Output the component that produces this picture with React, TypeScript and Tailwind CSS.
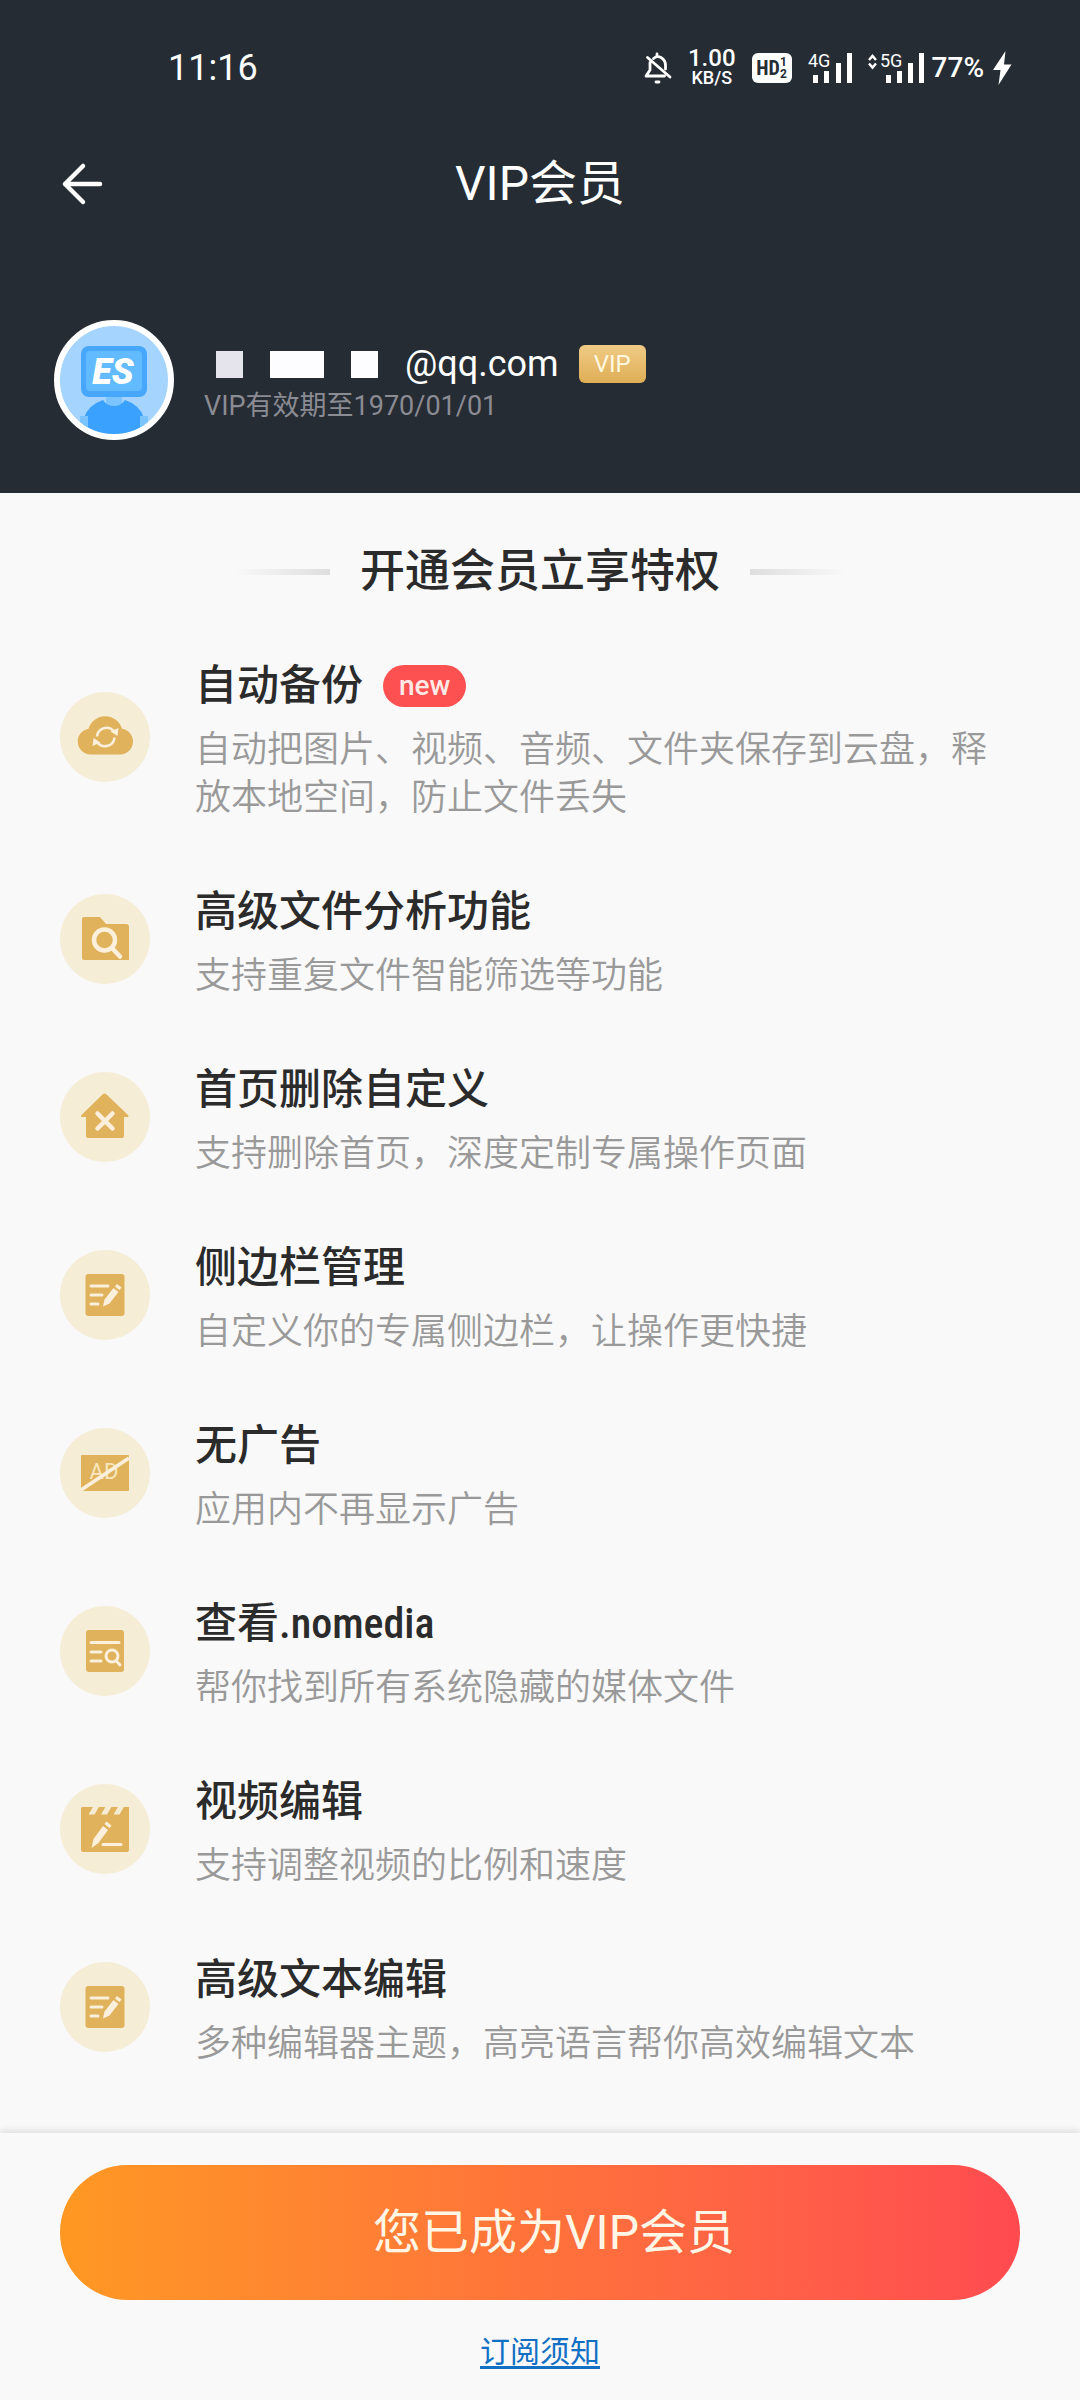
import React from 'react';

interface Feature {
  title: string;
  description: string;
  icon: React.ReactNode;
  isNew?: boolean;
}

const GOLD = '#dfb25b';
const CREAM = '#fcf0dc';

// --- Feature icons, all drawn on a 60x60 board ---

const CloudSyncIcon = () => (
  <svg viewBox="0 0 60 60" className="h-15 w-15" fill="none">
    <path d="M15 48a13 13 0 0 1-2-25.800a17.500 17.500 0 0 1 33.500 0a13 13 0 0 1-1 25.800z" fill={GOLD} transform="translate(.5 -.5)" />
    <path d="M22 29.500a9.500 9.500 0 0 1 17-5M39.500 30.500a9.500 9.500 0 0 1-17 5" stroke={CREAM} strokeWidth="2.600" />
    <path d="M43.500 21l-1 8-7-4.500zM17.500 39l1-8 7 4.500z" fill={CREAM} />
  </svg>
);

const FolderSearchIcon = () => (
  <svg viewBox="0 0 60 60" className="h-15 w-15" fill="none">
    <path d="M9 8h16l6 7h20a3 3 0 0 1 3 3v33H9a2 2 0 0 1-2-2V10a2 2 0 0 1 2-2z" fill={GOLD} />
    <circle cx="29.500" cy="31" r="10.500" stroke={CREAM} strokeWidth="4.500" />
    <path d="M37 39l8 8.500" stroke={CREAM} strokeWidth="4.500" strokeLinecap="round" />
  </svg>
);

const HomeRemoveIcon = () => (
  <svg viewBox="0 0 60 60" className="h-15 w-15" fill="none">
    <path d="M27.500 7.500q2-2 4 0L53 28q1.500 2-1 2h-3v19a2 2 0 0 1-2 2H13a2 2 0 0 1-2-2V30H7.500q-2.500 0-1-2z" fill={GOLD} />
    <path d="M22.500 26.500l15 15M37.500 26.500l-15 15" stroke={CREAM} strokeWidth="4.500" strokeLinecap="round" />
  </svg>
);

const NoteEditIcon = () => (
  <svg viewBox="0 0 60 60" className="h-15 w-15" fill="none">
    <rect x="10.500" y="9" width="39" height="42" rx="3" fill={GOLD} />
    <path d="M16 21h17M16 30h11M16 39h7" stroke={CREAM} strokeWidth="3" strokeLinecap="round" />
    <path d="M28 41.500l1.500-7 9-11.500 5 4-9 11.500z" fill={CREAM} />
    <path d="M40 21.500l2-2.600 4.500 3.600-2 2.600z" fill={CREAM} />
  </svg>
);

const NoAdIcon = () => (
  <svg viewBox="0 0 60 60" className="h-15 w-15">
    <rect x="6" y="12" width="48" height="36" rx="1" fill={GOLD} />
    <text x="29" y="36" textAnchor="middle" fontSize="22" fill="#f8e6bd">AD</text>
    <path d="M6 47L54 15" stroke={CREAM} strokeWidth="3.500" />
  </svg>
);

const NoteSearchIcon = () => (
  <svg viewBox="0 0 60 60" className="h-15 w-15" fill="none">
    <rect x="11" y="9" width="38" height="42" rx="3" fill={GOLD} />
    <path d="M16 21.500h28M16 31h10M16 40h10" stroke={CREAM} strokeWidth="3" strokeLinecap="round" />
    <circle cx="37" cy="35" r="6" stroke={CREAM} strokeWidth="3" />
    <path d="M41 39.500l4 4.500" stroke={CREAM} strokeWidth="3" strokeLinecap="round" />
  </svg>
);

const VideoEditIcon = () => (
  <svg viewBox="0 0 60 60" className="h-15 w-15" fill="none">
    <path d="M7 8h47v43a2 2 0 0 1-2 2H8a2 2 0 0 1-2-2V9z" fill={GOLD} />
    <path d="M18.500 7h6l-5 8.500h-6zM31 7h6l-5 8.500h-6zM43.500 7h6l-5 8.500h-6z" fill="#f6ecd6" />
    <path d="M16.500 49l2-9 9.500-13 5 4-9.500 13z" fill={CREAM} />
    <path d="M29.500 25l2-2.600 5 4-2 2.600z" fill={CREAM} />
    <path d="M28 45.500h18" stroke={CREAM} strokeWidth="3" strokeLinecap="round" />
  </svg>
);

const features: Feature[] = [
  { title: '自动备份', description: '自动把图片、视频、音频、文件夹保存到云盘，释放本地空间，防止文件丢失', icon: <CloudSyncIcon />, isNew: true },
  { title: '高级文件分析功能', description: '支持重复文件智能筛选等功能', icon: <FolderSearchIcon /> },
  { title: '首页删除自定义', description: '支持删除首页，深度定制专属操作页面', icon: <HomeRemoveIcon /> },
  { title: '侧边栏管理', description: '自定义你的专属侧边栏，让操作更快捷', icon: <NoteEditIcon /> },
  { title: '无广告', description: '应用内不再显示广告', icon: <NoAdIcon /> },
  { title: '查看.nomedia', description: '帮你找到所有系统隐藏的媒体文件', icon: <NoteSearchIcon /> },
  { title: '视频编辑', description: '支持调整视频的比例和速度', icon: <VideoEditIcon /> },
  { title: '高级文本编辑', description: '多种编辑器主题，高亮语言帮你高效编辑文本', icon: <NoteEditIcon /> },
];

const StatusBar = () => (
  <div className="flex h-34 items-center justify-between pr-17 pl-42">
    <span className="text-4xl">11:16</span>
    <div className="flex items-center">
      <svg viewBox="0 0 28 32" className="mr-4 h-8 w-7" fill="none" stroke="currentColor" strokeWidth="2.800" strokeLinecap="round" strokeLinejoin="round">
        <path d="M13 2v2M9.500 6.500Q13 3.500 17 5.500Q21.500 8 21.500 13.500V17M6 10.500V18l-4 6h18.500M3.500 5.500L26 25M12 30h3" />
      </svg>
      <div className="mr-4 flex flex-col items-center font-medium">
        <span className="text-2xl leading-5">1.00</span>
        <span className="text-lg leading-5">KB/S</span>
      </div>
      <div className="mr-4 flex h-[30px] w-10 items-center justify-center rounded-md bg-white font-bold text-[#252c34]">
        <span className="font-['Roboto_Condensed','Liberation_Sans_Narrow',Roboto,sans-serif] text-xl leading-6">HD</span>
        <span className="flex flex-col text-xs leading-3">
          <span>1</span>
          <span>2</span>
        </span>
      </div>
      <svg viewBox="0 0 44 30" className="mr-4 h-[30px] w-11 overflow-visible" fill="currentColor">
        <text x="0" y="14" fontSize="18">4G</text>
        <path d="M5 22h5v8H5zM16 18h5v12h-5zM28 10h5v20h-5zM39 0h5v30h-5z" />
      </svg>
      <svg viewBox="0 0 56 30" className="mr-2 h-[30px] w-14 overflow-visible" fill="currentColor">
        <path d="M1 7l3.500-4L8 7M1 10.500l3.500 4 3.500-4" fill="none" stroke="currentColor" strokeWidth="2.500" />
        <text x="12" y="14" fontSize="18">5G</text>
        <path d="M18 22h5v8h-5zM29 18h5v12h-5zM40 10h5v20h-5zM51 0h5v30h-5z" />
      </svg>
      <span className="mr-2 text-[28px] font-medium">77%</span>
      <svg viewBox="0 0 20 34" className="h-[34px] w-5" fill="currentColor">
        <path d="M13.500 0L1 19h7.500L6.500 34 19.500 13.500H12z" />
      </svg>
    </div>
  </div>
);

const Avatar = () => (
  <div className="h-30 w-30 shrink-0 overflow-hidden rounded-full border-6 border-white bg-[#a5d4ff]">
    <svg viewBox="6 6 108 108" className="h-full w-full">
      <path d="M52 76h16v12H52z" fill="#7cc4ff" />
      <path d="M30 98q4-13 19-18q4 6 11 6t11-6q15 5 19 18v18H30z" fill="#3ba1fe" />
      <path d="M26 96h8v18h-8zM86 96h8v18h-8z" fill="#7cc4ff" />
      <rect x="27" y="26" width="66" height="51" rx="8" fill="#46a7fd" />
      <rect x="32" y="31" width="56" height="40" rx="4" fill="#62bbff" />
      <text x="59" y="64" textAnchor="middle" fontSize="36" fontWeight="900" fontStyle="italic" fill="#fff">ES</text>
    </svg>
  </div>
);

const FeatureRow: React.FC<{ feature: Feature }> = ({ feature }) => (
  <li className="flex items-center gap-[45px] py-7">
    <div className="flex h-[90px] w-[90px] shrink-0 items-center justify-center rounded-full bg-[#f6edd7]">
      {feature.icon}
    </div>
    <div className="flex-1 pt-1">
      <div className="mb-2.5 flex items-center gap-5">
        <h3 className="font-['Roboto_Condensed','Liberation_Sans_Narrow','Noto_Sans_CJK_SC',sans-serif] text-[42px] leading-[60px] font-medium text-[#2b2b2b]">
          {feature.title}
        </h3>
        {feature.isNew && (
          <span className="rounded-full bg-[#fc5051] px-4 text-[28px] leading-[42px] font-medium text-[#ffe9e6]">new</span>
        )}
      </div>
      <p className="text-4xl leading-12 font-[350] text-[#999999]">{feature.description}</p>
    </div>
  </li>
);

export default function App() {
  return (
    <div lang="zh-CN" className="flex min-h-screen flex-col bg-[#f9f9f9] font-[Roboto,'Noto_Sans_CJK_SC',sans-serif]">
      <header className="bg-[#252c34] pb-[53px] text-white">
        <StatusBar />
        <nav className="grid h-24 grid-cols-[1fr_auto_1fr] items-center px-15">
          <button type="button" aria-label="返回" className="h-12 w-12">
            <svg viewBox="0 0 48 48" className="h-12 w-12" fill="none" stroke="currentColor" strokeWidth="4.500" strokeLinecap="round" strokeLinejoin="round">
              <path d="M40 24H5M23 6L5 24l18 18" />
            </svg>
          </button>
          <h1 className="text-5xl">VIP会员</h1>
        </nav>

        {/* Account */}
        <div className="mt-22 flex items-center gap-[30px] px-[54px]">
          <Avatar />
          <div className="pt-1">
            <div className="flex h-12 items-center">
              {/* masked part of the address */}
              <span className="ml-3 h-[27px] w-[27px] bg-[#e5e3ec]" />
              <span className="ml-[27px] h-[27px] w-[54px] bg-[#fdfdff]" />
              <span className="ml-[27px] h-[27px] w-[27px] bg-[#fdfdff]" />
              <span className="ml-[27px] text-4xl">@qq.com</span>
              <span className="ml-5 rounded-md bg-linear-to-b from-[#f0cb85] to-[#dfae55] px-[15px] text-2xl leading-[38px] text-[#fff8e0]">VIP</span>
            </div>
            <p className="text-[27px] leading-9 text-[#8b8b93]">VIP有效期至1970/01/01</p>
          </div>
        </div>
      </header>

      <main className="flex-1 px-15 pt-[49px] pb-9">
        <div className="mb-[22px] flex items-center justify-center gap-[30px]">
          <span className="h-1.5 w-24 bg-linear-to-r from-[#f9f9f9] to-[#dedede]" />
          <h2 className="text-[45px] leading-[60px] font-medium text-[#2b2b2b]">开通会员立享特权</h2>
          <span className="h-1.5 w-24 bg-linear-to-l from-[#f9f9f9] to-[#dedede]" />
        </div>
        <ul>
          {features.map((feature) => (
            <FeatureRow key={feature.title} feature={feature} />
          ))}
        </ul>
      </main>

      <footer className="flex flex-col items-center px-15 pt-8 pb-7 shadow-[0_-2px_8px_rgba(0,0,0,0.12)]">
        <button type="button" className="h-[135px] w-full rounded-full bg-linear-to-r from-[#ff9822] via-[#ff723a] to-[#ff4a50] pl-7 text-5xl text-[#fff6e6]">
          您已成为VIP会员
        </button>
        <a href="#notice" className="mt-8 text-3xl leading-10 text-[#1170c4] underline underline-offset-4">订阅须知</a>
      </footer>
    </div>
  );
}
